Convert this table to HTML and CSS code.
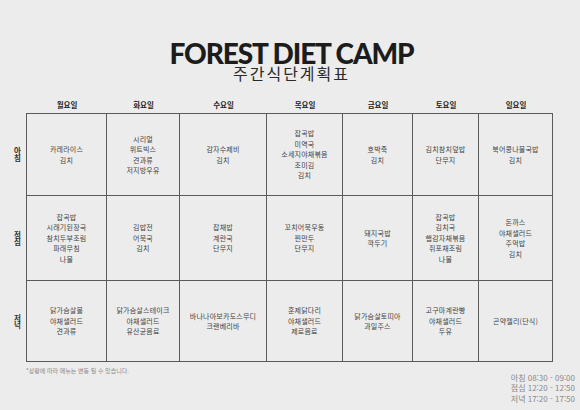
FILE: index.html
```html
<!DOCTYPE html>
<html lang="ko">
<head>
<meta charset="utf-8">
<title>FOREST DIET CAMP 주간식단계획표</title>
<link rel="stylesheet" href="styles.css">
</head>
<body>
<div class="page">
  <header class="head">
    <h1 class="title">FOREST DIET CAMP</h1>
    <p class="subtitle">주간식단계획표</p>
  </header>

  <div class="timetable">
    <div class="corner"></div>
    <div class="days">
      <div class="day">월요일</div>
      <div class="day">화요일</div>
      <div class="day">수요일</div>
      <div class="day">목요일</div>
      <div class="day">금요일</div>
      <div class="day">토요일</div>
      <div class="day">일요일</div>
    </div>

    <div class="labels">
      <div class="label"><span class="label-text">아침</span></div>
      <div class="label"><span class="label-text">점심</span></div>
      <div class="label"><span class="label-text">저녁</span></div>
    </div>

    <div class="board">
      <div class="cell">카레라이스<br>김치</div>
      <div class="cell">시리얼<br>위트빅스<br>견과류<br>저지방우유</div>
      <div class="cell">감자수제비<br>김치</div>
      <div class="cell">잡곡밥<br>미역국<br>소세지야채볶음<br>조미김<br>김치</div>
      <div class="cell">호박죽<br>김치</div>
      <div class="cell">김치참치덮밥<br>단무지</div>
      <div class="cell">북어콩나물국밥<br>김치</div>

      <div class="cell">잡곡밥<br>시래기된장국<br>참치두부조림<br>파래무침<br>나물</div>
      <div class="cell">김밥전<br>어묵국<br>김치</div>
      <div class="cell">잡채밥<br>계란국<br>단무지</div>
      <div class="cell">꼬치어묵우동<br>찐만두<br>단무지</div>
      <div class="cell">돼지국밥<br>깍두기</div>
      <div class="cell">잡곡밥<br>김치국<br>햄감자채볶음<br>쥐포채조림<br>나물</div>
      <div class="cell">돈까스<br>야채샐러드<br>주먹밥<br>김치</div>

      <div class="cell">닭가슴살볼<br>야채샐러드<br>견과류</div>
      <div class="cell">닭가슴살스테이크<br>야채샐러드<br>유산균음료</div>
      <div class="cell">바나나아보카도스무디<br>크랜베리바</div>
      <div class="cell">훈제닭다리<br>야채샐러드<br>제로음료</div>
      <div class="cell">닭가슴살토띠아<br>과일주스</div>
      <div class="cell">고구마계란빵<br>야채샐러드<br>두유</div>
      <div class="cell">곤약젤리(단식)</div>
    </div>
  </div>

  <footer class="foot">
    <p class="note">*상황에 따라 메뉴는 변동 될 수 있습니다.</p>
    <ul class="times">
      <li>아침 08:30 - 09:00</li>
      <li>점심 12:20 - 12:50</li>
      <li>저녁 17:20 - 17:50</li>
    </ul>
  </footer>
</div>
</body>
</html>
```

FILE: styles.css
```css
* {
  box-sizing: border-box;
}

html, body {
  margin: 0;
  padding: 0;
  background: #ececec;
}

body {
  width: 580px;
  height: 410px;
  overflow: hidden;
  font-family: "Noto Sans CJK KR", "Noto Sans", sans-serif;
  color: #333;
}

.page {
  padding: 41px 5px 0 8px;
}

.head {
  text-align: center;
}

.title {
  margin: 0;
  font-family: "Lato", "Liberation Sans", sans-serif;
  font-weight: 900;
  font-size: 28px;
  line-height: 24px;
  letter-spacing: -1.1px;
  color: #1c1c1c;
}

.subtitle {
  margin: 0;
  font-family: "Noto Sans CJK KR", sans-serif;
  font-weight: 400;
  font-size: 16px;
  line-height: 16px;
  letter-spacing: 2px;
  color: #2a2a2a;
}

.timetable {
  margin-top: 14px;
  display: grid;
  grid-template-columns: 18px auto;
  grid-template-rows: 18px auto;
  justify-content: start;
}

.days,
.board {
  display: grid;
  grid-template-columns: 80px 73px 87px 76px 70px 66px 74px;
}

.days {
  padding-left: 1px;
}

.day {
  display: flex;
  align-items: center;
  justify-content: center;
  font-size: 7.5px;
  font-weight: 700;
  color: #222;
}

.labels {
  display: grid;
  grid-template-rows: 82px 85px 81px;
}

.label {
  display: flex;
  align-items: center;
  justify-content: center;
}

.label-text {
  writing-mode: vertical-rl;
  text-orientation: upright;
  font-size: 7.5px;
  font-weight: 700;
  letter-spacing: -0.5px;
  line-height: 8px;
  color: #333;
}

.board {
  grid-template-rows: 82px 85px 81px;
  border-top: 1px solid #5a5a5a;
  border-left: 1px solid #5a5a5a;
}

.cell {
  display: flex;
  align-items: center;
  justify-content: center;
  text-align: center;
  border-right: 1px solid #5a5a5a;
  border-bottom: 1px solid #5a5a5a;
  font-size: 7px;
  line-height: 10.5px;
  letter-spacing: 0.2px;
  color: #444;
}

.foot {
  display: flex;
  justify-content: space-between;
  align-items: flex-start;
  padding-left: 18px;
}

.note {
  margin: 5px 0 0;
  font-size: 6px;
  line-height: 8px;
  color: #8a8a8a;
}

.times {
  list-style: none;
  margin: 10.5px 0 0;
  padding: 0;
  text-align: right;
  font-size: 8px;
  line-height: 10.5px;
  color: #8a8a8a;
}
```
